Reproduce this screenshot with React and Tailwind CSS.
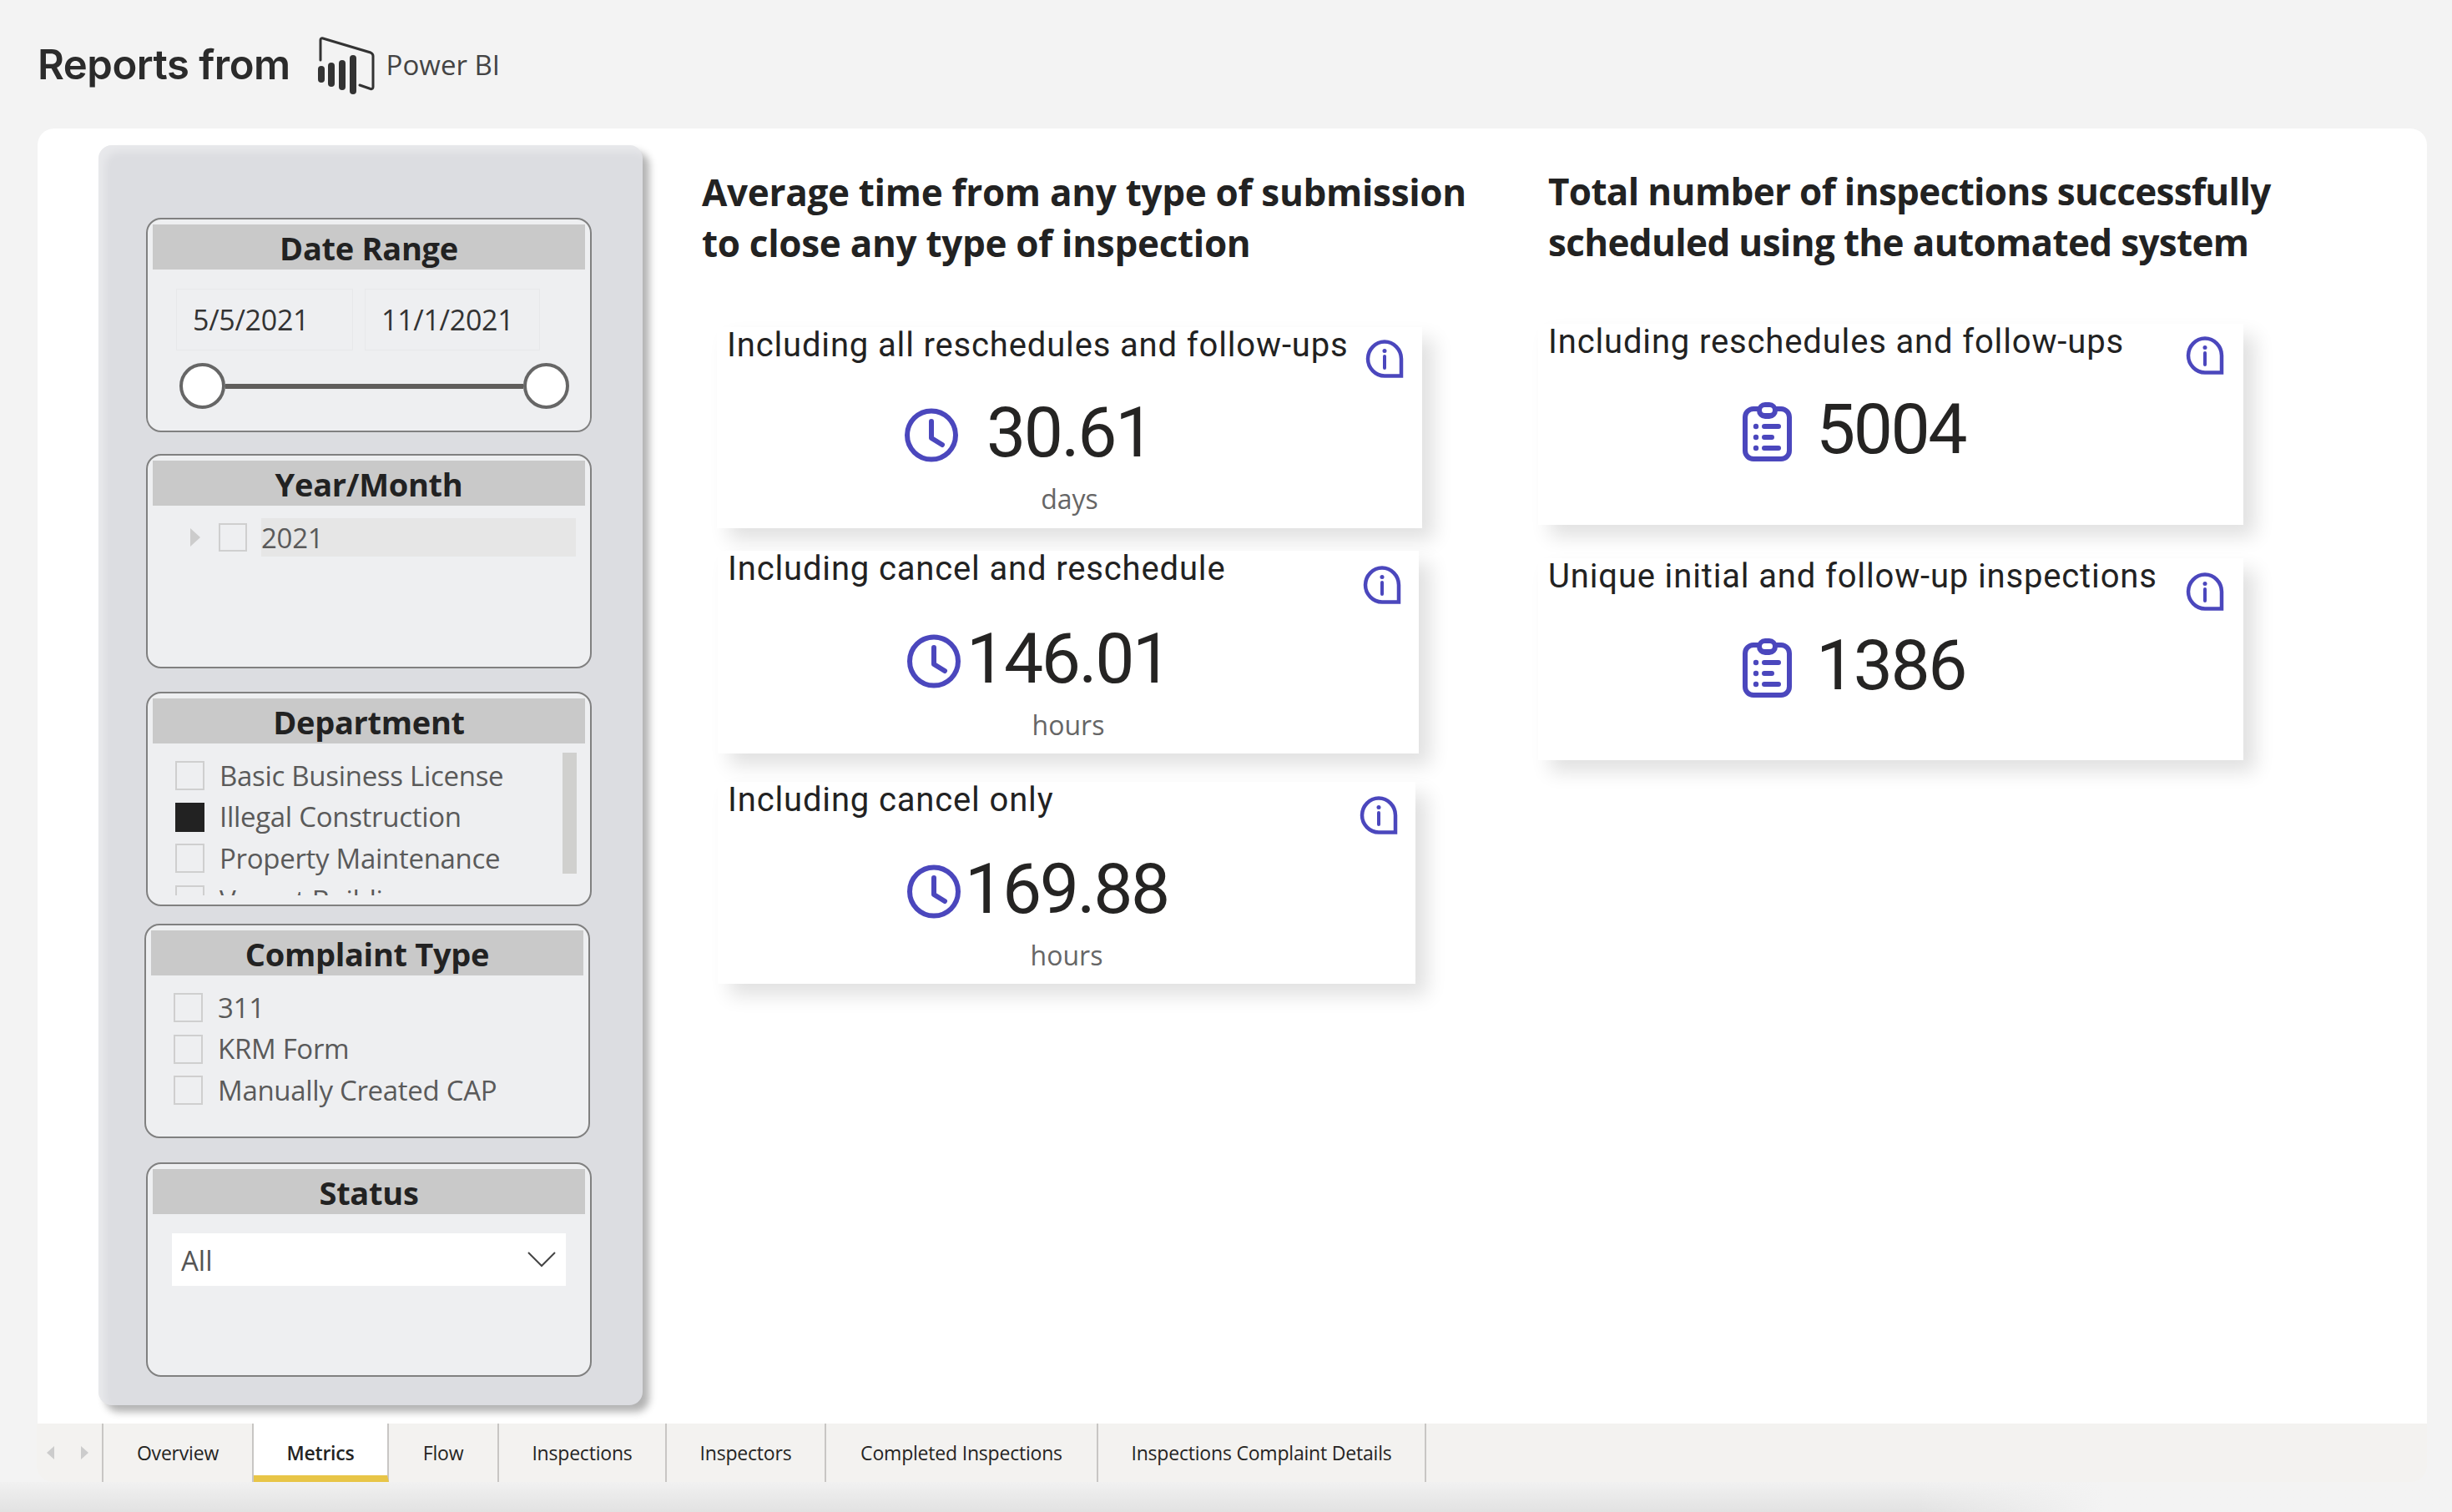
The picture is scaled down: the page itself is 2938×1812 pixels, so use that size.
import React from 'react'

const INDIGO = '#4b47bd'

function InfoIcon({ className }) {
  return (
    <svg width="46" height="46" viewBox="0 0 46 46" fill="none" className={className}>
      <path d="M43 43.500H23C12 43.500 3 34 3 23S12 2.500 23 2.500 43 12 43 23Z" stroke={INDIGO} strokeWidth="4.500" />
      <path d="M23 20V34" stroke={INDIGO} strokeWidth="4" strokeLinecap="round" />
      <circle cx="23" cy="13.500" r="2.500" fill={INDIGO} />
    </svg>
  )
}

function ClockIcon({ className }) {
  return (
    <svg width="64" height="65" viewBox="0 0 64 65" fill="none" className={className}>
      <circle cx="32" cy="32.500" r="29" stroke={INDIGO} strokeWidth="6" />
      <path d="M32 16V36L45 44" stroke={INDIGO} strokeWidth="6" strokeLinecap="round" strokeLinejoin="round" />
    </svg>
  )
}

function ClipboardIcon({ className }) {
  return (
    <svg width="59" height="71" viewBox="0 0 59 71" fill="none" className={className}>
      <rect x="3" y="8" width="53" height="60" rx="10" stroke={INDIGO} strokeWidth="6" />
      <rect x="17" y="0" width="25" height="20" rx="10" fill={INDIGO} />
      <rect x="23" y="6" width="13" height="7" rx="3.500" fill="#fff" />
      <circle cx="16" cy="29" r="3.200" fill={INDIGO} />
      <circle cx="16" cy="42" r="3.200" fill={INDIGO} />
      <circle cx="16" cy="55" r="3.200" fill={INDIGO} />
      <path d="M26 29H43M26 42H35M26 55H43" stroke={INDIGO} strokeWidth="6" strokeLinecap="round" />
    </svg>
  )
}

function PowerBiLogo() {
  return (
    <svg width="70" height="70" viewBox="0 0 70 70" fill="none">
      <path d="M4 28V4C4 2.500 5 1.500 7 2L64 19C66 20 67 21 67 23V60C67 62 66 63 64 62.500L51 58" stroke="#333" strokeWidth="3" strokeLinecap="round" />
      <rect x="1" y="35" width="8" height="20" rx="4" fill="#333" />
      <rect x="13" y="31" width="8" height="29" rx="4" fill="#333" />
      <rect x="26" y="28" width="8" height="36" rx="4" fill="#333" />
      <rect x="39" y="22" width="8" height="47" rx="4" fill="#333" />
    </svg>
  )
}

function Slicer({ title, className, children }) {
  return (
    <section className={`h-[257px] w-[534px] shrink-0 overflow-hidden rounded-[18px] border-2 border-[#808080] bg-[#eeeff1] px-[6px] pt-[6px] ${className}`}>
      <h3 className="h-[54px] bg-[#c9c9c9] text-center text-[38px] leading-[56px] font-bold tracking-[-0.3px] text-[#222]">{title}</h3>
      {children}
    </section>
  )
}

function CheckRow({ label, checked }) {
  return (
    <div className="flex h-[49.6px] shrink-0 items-center">
      <span className={`h-[35px] w-[35px] shrink-0 border-2 ${checked ? 'border-[#222] bg-[#222]' : 'border-[#cfcfcf]'}`} />
      <span className="ml-[18px] text-[33px] leading-[40px] tracking-[-0.3px] whitespace-nowrap text-[#5a5a5a]">{label}</span>
    </div>
  )
}

function Filters() {
  return (
    <aside className="ml-[73px] mt-[20px] flex h-[1510px] w-[652px] shrink-0 flex-col gap-[28px] rounded-[16px] bg-[#dcdde1] pl-[57px] pt-[87px] shadow-[8px_8px_10px_rgba(0,0,0,0.3),inset_8px_8px_10px_rgba(255,255,255,0.35)]">
      <Slicer title="Date Range" className="-mb-[2px]">
        <div className="ml-[28px] mt-[23px] flex gap-[14px]">
          <div className="flex h-[74px] w-[212px] items-center border border-[#e7e8ea] pl-[19px] text-[34px] tracking-[-0.3px] text-[#333]">5/5/2021</div>
          <div className="flex h-[74px] w-[210px] items-center border border-[#e7e8ea] pl-[19px] text-[34px] tracking-[-0.3px] text-[#333]">11/1/2021</div>
        </div>
        <div className="ml-[32px] mt-[15px] flex w-[467px] items-center">
          <span className="h-[55px] w-[55px] shrink-0 rounded-full border-[4px] border-[#666] bg-white" />
          <span className="h-[6px] flex-1 bg-[#605e5c]" />
          <span className="h-[55px] w-[55px] shrink-0 rounded-full border-[4px] border-[#666] bg-white" />
        </div>
      </Slicer>

      <Slicer title="Year/Month">
        <div className="ml-[45px] mt-[15px] flex h-[46px] items-center">
          <span className="h-0 w-0 border-y-[11px] border-l-[12px] border-y-transparent border-l-[#ccc]" />
          <span className="ml-[22px] h-[34px] w-[34px] border-2 border-[#cfcfcf]" />
          <span className="ml-[17px] flex h-[46px] w-[377px] items-center bg-[#e6e6e6] pt-[2px] text-[33px] tracking-[-0.3px] text-[#5a5a5a]">2021</span>
        </div>
      </Slicer>

      <Slicer title="Department">
        <div className="relative mt-[11px] h-[171px] overflow-hidden pl-[27px]">
          <div className="flex flex-col pt-[3px]">
            <CheckRow label="Basic Business License" />
            <CheckRow label="Illegal Construction" checked />
            <CheckRow label="Property Maintenance" />
            <CheckRow label="Vacant Building" />
          </div>
          <span className="absolute right-[10px] top-0 h-[145px] w-[17px] bg-[#d0d0ce]" />
        </div>
      </Slicer>

      <Slicer title="Complaint Type" className="-ml-[2px] -mt-[7px] mb-[1px]">
        <div className="mt-[14px] flex flex-col pl-[27px]">
          <CheckRow label="311" />
          <CheckRow label="KRM Form" />
          <CheckRow label="Manually Created CAP" />
        </div>
      </Slicer>

      <Slicer title="Status">
        <div className="ml-[23px] mt-[23px] flex h-[63px] w-[472px] items-center justify-between bg-white pl-[11px] pr-[12px] text-[33px] text-[#555]">
          <span className="pt-[3px]">All</span>
          <svg width="34" height="19" viewBox="0 0 34 19" fill="none">
            <path d="M1 1L17 17L33 1" stroke="#444" strokeWidth="2" />
          </svg>
        </div>
      </Slicer>
    </aside>
  )
}

function MetricCard({ title, value, unit, icon, className, iconClass, infoClass }) {
  return (
    <div className={`relative bg-white shadow-[14px_14px_22px_rgba(0,0,0,0.12)] ${className}`}>
      <div className="flex items-start justify-between pl-[12px]">
        <h4 className="mt-[-1px] font-['Roboto',sans-serif] text-[40px] leading-[46px] tracking-[0.85px] whitespace-nowrap text-[#222]">{title}</h4>
        <InfoIcon className={infoClass} />
      </div>
      <div className="relative mt-[19px] text-center font-['Roboto',sans-serif] text-[84px] leading-[94px] tracking-[-2.4px] text-[#252423]">
        {icon === 'clock' ? <ClockIcon className={`absolute ${iconClass}`} /> : <ClipboardIcon className={`absolute ${iconClass}`} />}
        {value}
      </div>
      {unit && <p className="mt-[12px] text-center text-[32px] leading-[40px] text-[#666]">{unit}</p>}
    </div>
  )
}

const tabs = [
  { name: 'Overview', w: 'w-[180px]' },
  { name: 'Metrics', w: 'w-[162px]', active: true },
  { name: 'Flow', w: 'w-[132px]' },
  { name: 'Inspections', w: 'w-[201px]' },
  { name: 'Inspectors', w: 'w-[191px]' },
  { name: 'Completed Inspections', w: 'w-[326px]' },
  { name: 'Inspections Complaint Details', w: 'w-[393px]' },
]

export default function App() {
  return (
    <div className="flex h-[1812px] w-[2938px] flex-col overflow-hidden bg-[#f3f3f3] font-['Open_Sans',sans-serif]">
      <header className="flex h-[154px] shrink-0 items-center pl-[45px] pt-[2px]">
        <h1 className="font-['Inter',sans-serif] text-[49px] font-semibold tracking-[-0.5px] text-[#2b2b2b]">Reports from</h1>
        <div className="ml-[32px] mt-[2px]"><PowerBiLogo /></div>
        <span className="ml-[13px] text-[33px] text-[#444]">Power BI</span>
      </header>

      <main className="mx-[45px] mr-[30px] flex h-[1552px] shrink-0 rounded-t-[20px] bg-white">
        <Filters />

        <div className="ml-[71px] w-[1002px] shrink-0 pt-[46px]">
          <h2 className="text-[44px] leading-[61px] font-bold tracking-[-0.3px] text-[#222]">
            Average time from any type of submission<br />to close any type of inspection
          </h2>
          <div className="ml-[18px] mt-[70px] flex flex-col items-start">
            <MetricCard className="h-[241px] w-[845px]" title="Including all reschedules and follow-ups" value="30.61" unit="days" icon="clock" iconClass="left-[225px] top-[17px]" infoClass="mr-[22px] mt-[15px]" />
            <MetricCard className="mt-[27px] ml-[1px] h-[243px] w-[840px]" title="Including cancel and reschedule" value="146.01" unit="hours" icon="clock" iconClass="left-[227px] top-[17px]" infoClass="mr-[21px] mt-[18px]" />
            <MetricCard className="mt-[34px] ml-[1px] h-[242px] w-[836px]" title="Including cancel only" value="169.88" unit="hours" icon="clock" iconClass="left-[227px] top-[17px]" infoClass="mr-[21px] mt-[17px]" />
          </div>
        </div>

        <div className="flex-1 pt-[45px]">
          <h2 className="ml-[12px] text-[44px] leading-[61px] font-bold tracking-[-0.65px] text-[#222]">
            Total number of inspections successfully<br />scheduled using the automated system
          </h2>
          <div className="mt-[67px] flex flex-col items-start">
            <MetricCard className="h-[241px] w-[845px]" title="Including reschedules and follow-ups" value="5004" icon="clipboard" iconClass="left-[245px] top-[14px]" infoClass="mr-[23px] mt-[15px]" />
            <MetricCard className="mt-[40px] h-[242px] w-[845px]" title="Unique initial and follow-up inspections" value="1386" icon="clipboard" iconClass="left-[245px] top-[14px]" infoClass="mr-[23px] mt-[17px]" />
          </div>
        </div>
      </main>

      <nav className="ml-[44px] mr-[30px] flex h-[70px] shrink-0 rounded-b-[20px] bg-[#f3f2f0] text-[23px] tracking-[-0.2px] text-[#252423]">
        <div className="flex w-[80px] shrink-0 items-center justify-between border-r-2 border-[#c8c6c4] pl-[12px] pr-[16px]">
          <span className="h-0 w-0 border-y-[8px] border-r-[9px] border-y-transparent border-r-[#ccc]" />
          <span className="h-0 w-0 border-y-[8px] border-l-[9px] border-y-transparent border-l-[#ccc]" />
        </div>
        {tabs.map((tab) => (
          <div key={tab.name} className={`flex shrink-0 items-center justify-center border-r-2 border-[#c8c6c4] ${tab.w} ${tab.active ? 'border-b-[8px] border-b-[#e8c547] bg-white pt-[8px] font-semibold' : ''}`}>
            {tab.name}
          </div>
        ))}
      </nav>

      <div className="relative flex-1 bg-gradient-to-b from-[#f1f1f1] to-[#e2e2e2]">
        <div className="absolute inset-y-0 right-0 w-[640px] bg-gradient-to-r from-transparent from-0% to-[#f3f3f3] to-35%" />
      </div>
    </div>
  )
}
